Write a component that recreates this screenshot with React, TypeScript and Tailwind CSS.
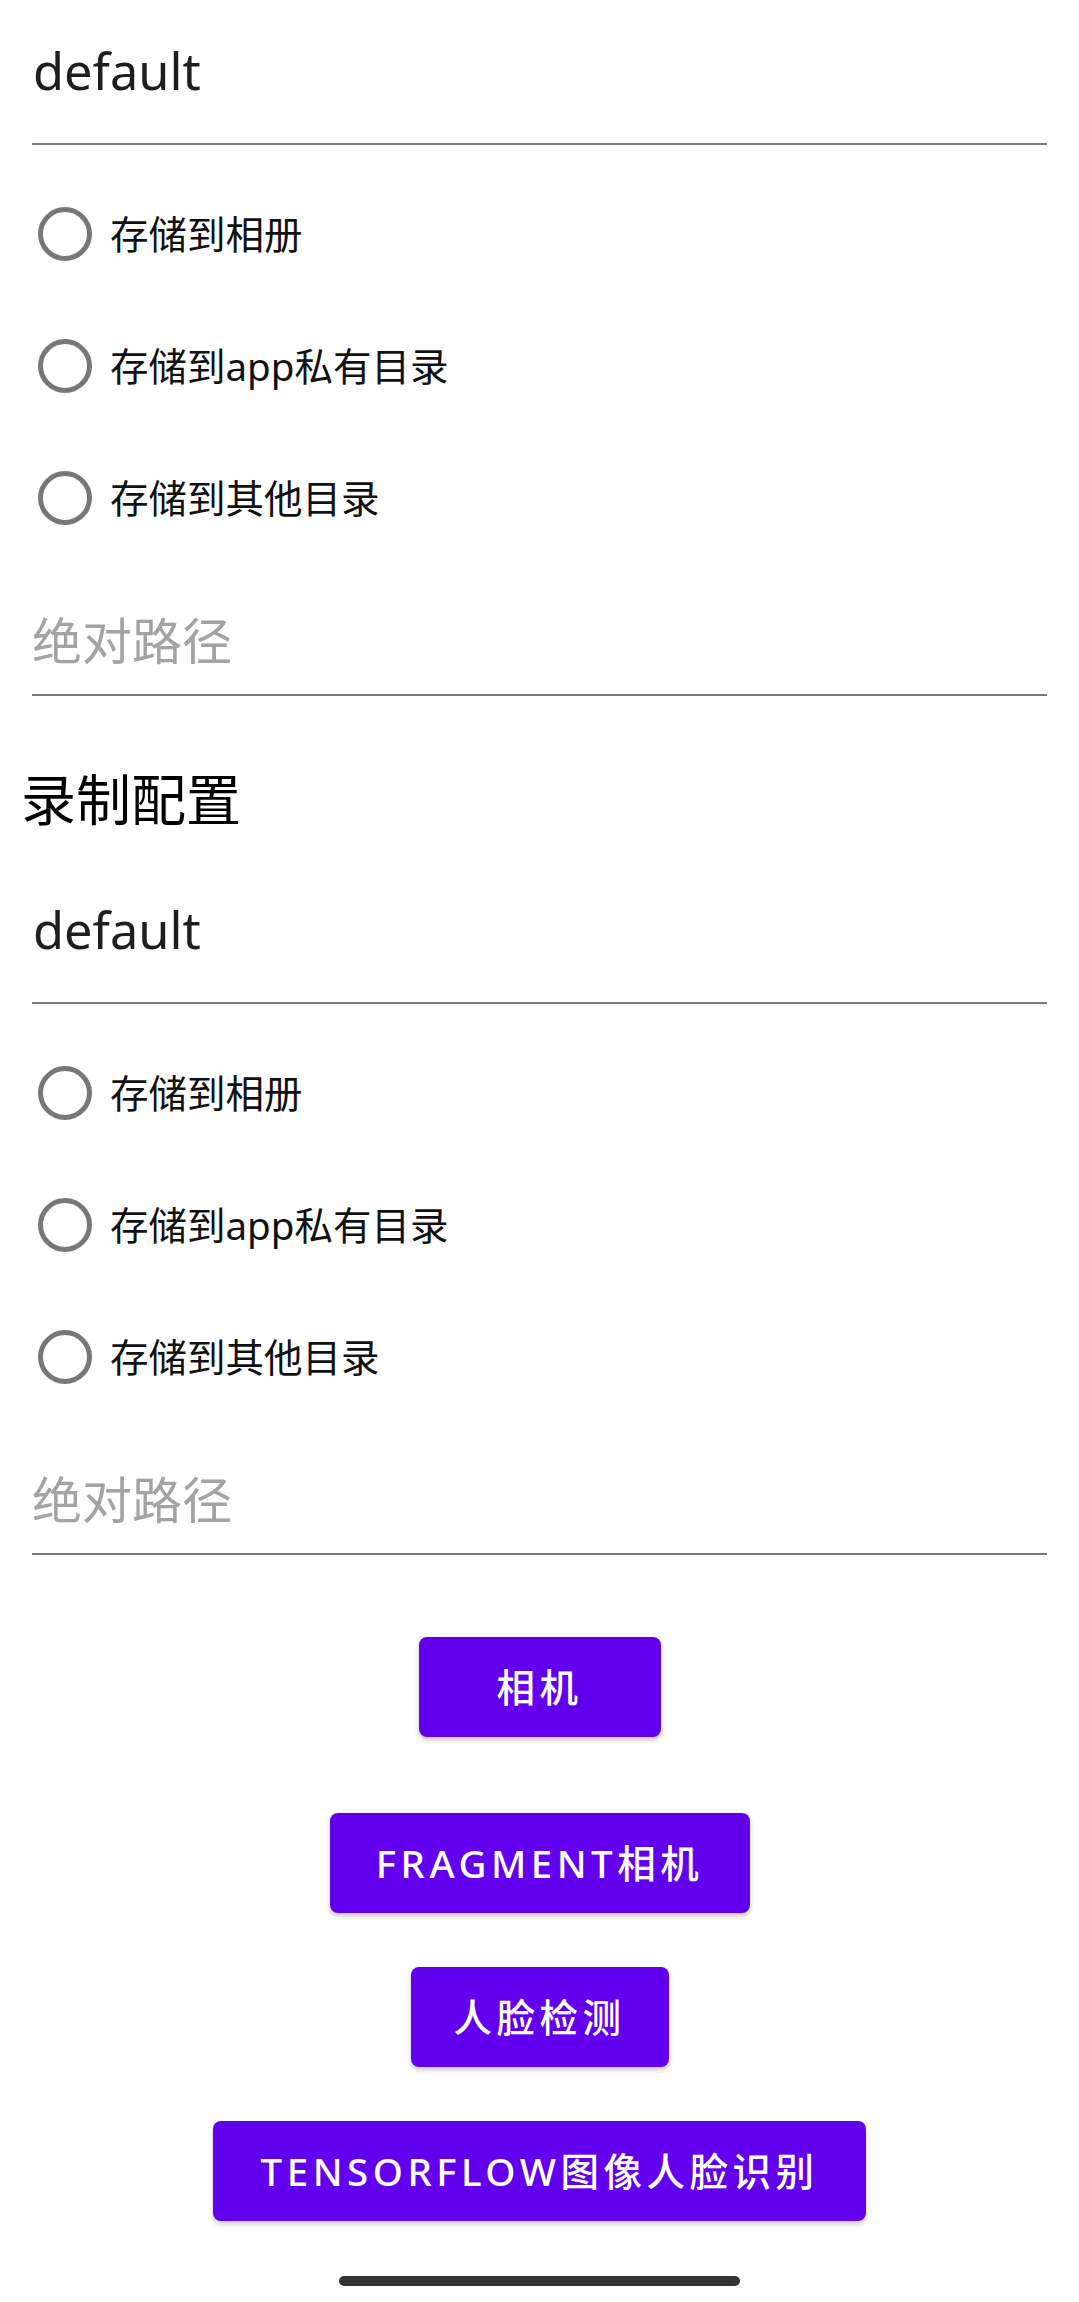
const FONT = "font-['Noto_Sans','Noto_Sans_CJK_SC',sans-serif]";

const OPTIONS = ["存储到相册", "存储到app私有目录", "存储到其他目录"];

const BUTTONS = [
  { label: "相机", w: "w-[242px]" },
  { label: "Fragment相机", w: "w-[420px]" },
  { label: "人脸检测", w: "w-[258px]" },
  { label: "TensorFlow图像人脸识别", w: "w-[653px]" },
];

function Radio({ label }: { label: string }) {
  return (
    <div className="flex items-center h-[132px] pl-[38px] gap-[18px]">
      <span className="w-[54px] h-[54px] rounded-full border-[5px] border-[#777] shrink-0" />
      <span className="text-[38.5px] leading-none text-[#111]">{label}</span>
    </div>
  );
}

// one storage config block: name field, radio group, path field
function ConfigGroup() {
  return (
    <div>
      <div className="ml-[32px] w-[1015px] h-[145px] pt-[41px] border-b-2 border-[#7a7a7a]">
        <div className="text-[50.5px] leading-[60px] text-[#1e1e1e] pl-[1px]">default</div>
      </div>
      <div className="mt-[23px]">
        {OPTIONS.map(o => <Radio key={o} label={o} />)}
      </div>
      <div className="ml-[32px] w-[1015px] h-[132px] pt-[47px] border-b-2 border-[#7a7a7a]">
        <div className="text-[50px] leading-[60px] text-[#a3a3a3]">绝对路径</div>
      </div>
    </div>
  );
}

export default function App() {
  return (
    <div className={`w-[1079px] min-h-[2302px] bg-white ${FONT}`}>
      <ConfigGroup />
      <div className="h-[163px] pt-[68px] pl-[21px]">
        <div className="text-[55px] leading-[70px] text-black">录制配置</div>
      </div>
      <ConfigGroup />

      <div className="flex flex-col items-center pt-[82px]">
        {BUTTONS.map((b, i) => (
          <button
            key={b.label}
            className={`${b.w} h-[100px] ${i === 0 ? "" : i === 1 ? "mt-[76px]" : "mt-[54px]"} flex items-center justify-center rounded-[8px] bg-[#6200ee] text-white text-[38.5px] leading-none font-medium uppercase tracking-[4.5px] shadow-[0_3px_5px_rgba(0,0,0,0.22)]`}
          >
            {b.label}
          </button>
        ))}
        <div className="mt-[55px] w-[401px] h-[10px] rounded-full bg-[#333]" />
      </div>
    </div>
  );
}
